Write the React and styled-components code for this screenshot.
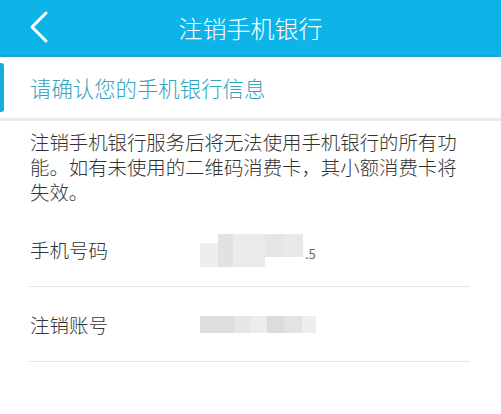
import styled, { createGlobalStyle } from 'styled-components'

const GlobalStyle = createGlobalStyle`
  html, body {
    margin: 0;
    padding: 0;
    background: #ffffff;
  }
  body {
    font-family: "Noto Sans CJK SC", "Noto Sans", sans-serif;
    color: #333333;
  }
`

const Page = styled.div`
  width: 501px;
  height: 414px;
  overflow: hidden;
  background: #fff;
`

const Header = styled.header`
  position: relative;
  height: 55px;
  background: #0cb4e8;
  border-bottom: 2px solid #1ea3cc;
  display: flex;
  align-items: center;
  justify-content: center;
`

const BackButton = styled.button`
  position: absolute;
  left: 24px;
  top: 8px;
  width: 30px;
  height: 38px;
  padding: 0;
  border: none;
  background: transparent;
  display: flex;
  align-items: center;
  justify-content: center;
`

const Title = styled.h1`
  margin: 0;
  font-size: 24px;
  font-weight: 300;
  color: #fff;
  line-height: 1;
`

const Section = styled.div`
  position: relative;
  height: 61px;
  display: flex;
  align-items: center;
  padding-left: 30px;
  border-bottom: 3px solid #ebebeb;
`

const Accent = styled.span`
  position: absolute;
  left: 0;
  top: 6px;
  bottom: 6px;
  width: 4px;
  border-radius: 0 3px 3px 0;
  background: #15aede;
`

const SectionTitle = styled.h2`
  margin: 0;
  font-size: 21.4px;
  font-weight: 300;
  color: #33a3c0;
  line-height: 1;
`

const Notice = styled.p`
  margin: 0;
  padding: 8px 30px 0 30px;
  font-size: 19.4px;
  font-weight: 300;
  line-height: 25px;
  color: #333;
`

const List = styled.div`
  padding: 0 30px 0 29px;
  margin-top: 8px;
`

const Row = styled.div`
  height: 74px;
  display: flex;
  align-items: center;
  border-bottom: 1px solid #e4e4e4;
  margin-right: 1px;
`

const Label = styled.span`
  width: 170px;
  padding-left: 1px;
  font-size: 19.5px;
  font-weight: 300;
  color: #333;
`

const Masked = styled.span`
  display: flex;
  align-items: center;
  height: ${p => p.$h}px;
  margin-top: ${p => p.$offset || 0}px;
`

const Block = styled.span`
  display: block;
  width: ${p => p.$w}px;
  height: ${p => p.$h || 100}%;
  align-self: ${p => p.$align || 'stretch'};
  background: ${p => p.$c};
`

const Digit = styled.span`
  font-size: 13px;
  color: #666;
  margin-left: 2px;
  margin-top: 6px;
`

export default function App() {
  return (
    <Page>
      <GlobalStyle />
      <Header>
        <BackButton aria-label="back">
          <svg width="22" height="34" viewBox="0 0 22 34">
            <path d="M18 3 L4 17 L18 31" fill="none" stroke="#fff" strokeWidth="3" strokeLinecap="round" strokeLinejoin="round" />
          </svg>
        </BackButton>
        <Title>注销手机银行</Title>
      </Header>
      <Section>
        <Accent />
        <SectionTitle>请确认您的手机银行信息</SectionTitle>
      </Section>
      <Notice>
        注销手机银行服务后将无法使用手机银行的所有功能。如有未使用的二维码消费卡，其小额消费卡将失效。
      </Notice>
      <List>
        <Row>
          <Label>手机号码</Label>
          <Masked $h={33} $offset={2}>
            <Block $w={18} $c="#ededed" $h={70} $align="flex-end" />
            <Block $w={15} $c="#e2e2e2" />
            <Block $w={32} $c="#ebebeb" />
            <Block $w={18} $c="#e5e5e5" $h={70} $align="flex-start" />
            <Block $w={20} $c="#e9e9e9" $h={70} $align="flex-start" />
            <Digit>.5</Digit>
          </Masked>
        </Row>
        <Row>
          <Label>注销账号</Label>
          <Masked $h={17}>
            <Block $w={34} $c="#dedede" />
            <Block $w={16} $c="#e6e6e6" />
            <Block $w={17} $c="#ececec" />
            <Block $w={17} $c="#dcdcdc" />
            <Block $w={18} $c="#e3e3e3" />
            <Block $w={14} $c="#eeeeee" />
          </Masked>
        </Row>
      </List>
    </Page>
  )
}
